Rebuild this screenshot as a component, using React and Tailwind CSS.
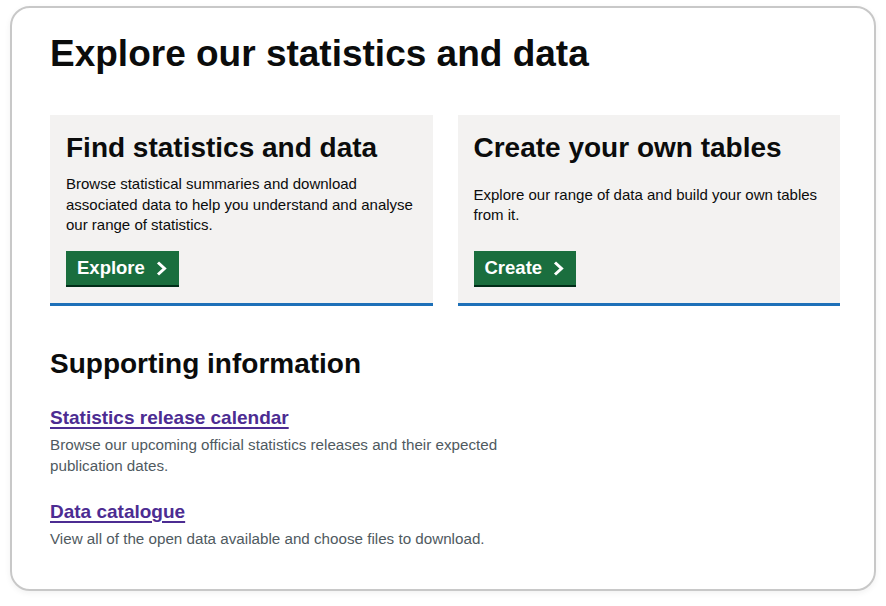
import React from "react";

const font = { fontFamily: '"Liberation Sans", Arial, sans-serif' };

function Chevron() {
  return (
    <svg width="11" height="15" viewBox="0 0 11 15" className="ml-[11px]">
      <polyline points="2,1.5 8.5,7.5 2,13.5" fill="none" stroke="white" strokeWidth="3" strokeLinecap="butt" strokeLinejoin="miter" />
    </svg>
  );
}

function Button({ children }) {
  return (
    <div className="inline-flex items-center h-[34px] pl-[11px] pr-[12px] bg-[#1a6e3e] text-white font-bold text-[18.5px] leading-none shadow-[0_2px_0_#002d18]">
      <span>{children}</span>
      <Chevron />
    </div>
  );
}

function Card({ title, body, button }) {
  return (
    <div className="flex-1 bg-[#f3f2f1] border-b-[3px] border-[#1d70b8] pt-[19px] px-[16px] pb-[18px]">
      <h2 className="text-[28px] leading-none font-bold text-[#0b0c0c]">{title}</h2>
      <div className="h-[62px] mt-[12px] flex items-center">
        <p className="text-[15px] leading-[20.5px] text-[#0b0c0c]">{body}</p>
      </div>
      <div className="mt-[15px]">
        <Button>{button}</Button>
      </div>
    </div>
  );
}

export default function App() {
  return (
    <div className="w-[886px] h-[606px] bg-white pt-[6px] pl-[10px]" style={font}>
      <div className="w-[866px] h-[585px] border-2 border-[#c8c8c8] rounded-[20px] shadow-[0_2px_6px_rgba(0,0,0,0.06)] pt-[27px] pl-[38px] pr-[34px]">
        <h1 className="text-[37px] leading-none font-bold text-[#0b0c0c]">Explore our statistics and data</h1>
        <div className="flex gap-[25px] mt-[43px] w-[790px]">
          <Card
            title="Find statistics and data"
            body="Browse statistical summaries and download associated data to help you understand and analyse our range of statistics."
            button="Explore"
          />
          <Card
            title="Create your own tables"
            body="Explore our range of data and build your own tables from it."
            button="Create"
          />
        </div>
        <h2 className="mt-[44px] text-[28px] leading-none font-bold text-[#0b0c0c]">Supporting information</h2>
        <div className="mt-[30px] w-[470px]">
          <a className="block text-[19px] leading-none font-bold text-[#4c2c92] underline decoration-[1.5px] underline-offset-[3px]">Statistics release calendar</a>
          <p className="mt-[8px] text-[15.2px] leading-[20.5px] text-[#505a5f]">Browse our upcoming official statistics releases and their expected publication dates.</p>
          <a className="block mt-[26px] text-[19px] leading-none font-bold text-[#4c2c92] underline decoration-[1.5px] underline-offset-[3px]">Data catalogue</a>
          <p className="mt-[8px] text-[15.2px] leading-[20.5px] text-[#505a5f]">View all of the open data available and choose files to download.</p>
        </div>
      </div>
    </div>
  );
}
